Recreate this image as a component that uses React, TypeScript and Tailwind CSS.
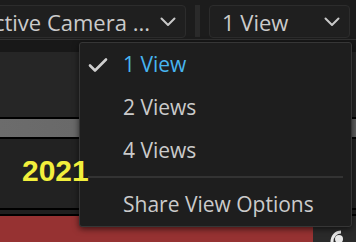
import React from "react";

const Chevron = () => (
  <svg width="16" height="10" viewBox="0 0 16 10" fill="none">
    <path d="M1.5 1.5l6.5 6.5 6.5-6.5" stroke="#c8c8c8" strokeWidth="2" strokeLinecap="round" strokeLinejoin="round" />
  </svg>
);

const Check = () => (
  <svg width="20" height="16" viewBox="0 0 20 16" fill="none">
    <path d="M2 8.5l5 5L18 2.5" stroke="#cfcfcf" strokeWidth="2.6" strokeLinecap="round" strokeLinejoin="round" />
  </svg>
);

const items = [
  { label: "1 View", active: true },
  { label: "2 Views", active: false },
  { label: "4 Views", active: false },
];

export default function App() {
  return (
    <div
      className="relative w-[356px] h-[242px] overflow-hidden bg-[#1c1c1c]"
      style={{ fontFamily: '"Open Sans", "Noto Sans", sans-serif' }}
    >
      {/* top toolbar */}
      <div className="h-[40px] flex items-start pt-[5px] bg-[#1c1c1c] border-b border-[#323232]">
        <div className="ml-[-31px] w-[217px] h-[33px] flex items-center justify-between pr-[9px] pl-[10px] rounded-[4px] border border-[#2c2c2c] bg-[#1f1f1f]">
          <span className="text-[22px] text-[#cbcbcb] whitespace-nowrap pt-[2px]">Active Camera ...</span>
          <Chevron />
        </div>
        <div className="ml-[9px] w-[5px] h-[32px] bg-[#2a2a2a]" />
        <div className="ml-[9px] w-[141px] h-[33px] flex items-center justify-between pl-[12px] pr-[9px] rounded-[4px] border border-[#2c2c2c] bg-[#1f1f1f]">
          <span className="text-[22px] text-[#cbcbcb] pt-[2px]">1 View</span>
          <Chevron />
        </div>
      </div>

      {/* panels behind */}
      <div className="flex flex-col">
        <div className="h-[12px] bg-[#181818]" />
        <div className="h-[65px] bg-[#262626]" />
        <div className="h-[2px] bg-black" />
        <div className="h-[18px] bg-gradient-to-r from-[#6c6c6c] to-[#5e5e5e]" />
        <div className="h-[2px] bg-black" />
        <div className="h-[69px] bg-[#222222]" />
        <div className="h-[2px] bg-black" />
        <div className="h-[4px] bg-[#1f1f1f]" />
        <div className="h-[2px] bg-black" />
        <div className="h-[26px] flex">
          <div className="w-[313px] bg-[#963232]" />
          <div className="flex-1 bg-[#2a2a2a] relative">
            <svg className="absolute left-[15px] top-[10px]" width="20" height="16" viewBox="0 0 20 16">
              <path d="M4 16c0-6 4-10 9-10" stroke="#e8e8e8" strokeWidth="3" fill="none" />
              <circle cx="11" cy="13" r="4" fill="#e8e8e8" />
            </svg>
          </div>
        </div>
      </div>

      {/* dropdown menu */}
      <div className="absolute left-[79px] top-[42px] w-[273px] h-[185px] bg-[#1e1e1e] border border-[#363636] rounded-[3px] shadow-[0_2px_6px_rgba(0,0,0,0.6)] flex flex-col">
        {items.map((it) => (
          <div key={it.label} className="h-[44px] flex items-center">
            <div className="w-[43px] flex justify-start pl-[8px]">{it.active && <Check />}</div>
            <span className={`text-[21px] ${it.active ? "text-[#47b5f0]" : "text-[#cbcbcb]"}`}>{it.label}</span>
          </div>
        ))}
        <div className="mx-[8px] mt-[3px] mb-[5px] h-[2px] bg-[#333333]" />
        <div className="h-[44px] flex items-center pl-[43px]">
          <span className="text-[21px] text-[#cbcbcb]">Share View Options</span>
        </div>
      </div>

      {/* yellow annotation drawn over the screenshot */}
      <span
        className="absolute left-[22px] top-[156px] text-[30px] font-bold text-[#f2ef3c] leading-none"
        style={{ fontFamily: '"Liberation Sans", Arial, sans-serif' }}
      >
        2021
      </span>
    </div>
  );
}
